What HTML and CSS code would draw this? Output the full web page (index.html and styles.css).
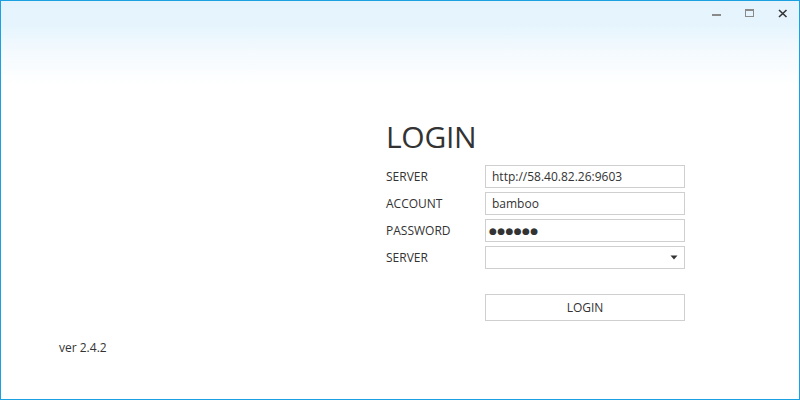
FILE: index.html
```html
<!DOCTYPE html>
<html>
<head>
<meta charset="utf-8">
<link rel="stylesheet" href="styles.css">
</head>
<body>
<div class="window">
  <div class="titlebar">
    <button class="tb-btn" aria-label="Minimize">
      <svg width="10" height="10" viewBox="0 0 10 10"><rect x="0" y="5" width="9" height="2" fill="#8a8a8a"/></svg>
    </button>
    <button class="tb-btn" aria-label="Maximize">
      <svg width="10" height="10" viewBox="0 0 10 10"><rect x="0.5" y="0.5" width="8" height="7" fill="none" stroke="#8a8a8a" stroke-width="1"/><rect x="0" y="0" width="9" height="2" fill="#8a8a8a"/></svg>
    </button>
    <button class="tb-btn" aria-label="Close">
      <svg width="10" height="10" viewBox="0 0 10 10"><path d="M1 1 L8.5 8 M8.5 1 L1 8" stroke="#333" stroke-width="1.6" fill="none"/></svg>
    </button>
  </div>
  <div class="main">
    <div class="form">
      <h1 class="title">LOGIN</h1>
      <div class="grid">
        <label class="lbl">SERVER</label>
        <input class="field" type="text" value="http://58.40.82.26:9603">
        <label class="lbl">ACCOUNT</label>
        <input class="field" type="text" value="bamboo">
        <label class="lbl">PASSWORD</label>
        <div class="field dots">●●●●●●</div>
        <label class="lbl">SERVER</label>
        <div class="field select">
          <svg width="8" height="5" viewBox="0 0 8 5"><path d="M0.5 0.5 L7.5 0.5 L4 4.5 Z" fill="#333"/></svg>
        </div>
      </div>
      <div class="actions">
        <button class="login-btn">LOGIN</button>
      </div>
    </div>
  </div>
  <div class="footer">ver 2.4.2</div>
</div>
</body>
</html>
```

FILE: styles.css
```css
html, body {
  margin: 0;
  padding: 0;
  background: #fff;
}
* { box-sizing: border-box; }

.window {
  width: 800px;
  height: 400px;
  border: 1px solid #1ba1e2;
  background: linear-gradient(to bottom, #e5f4fc 0px, #e6f5fd 25px, #f4fafe 50px, #ffffff 85px);
  font-family: "Open Sans", "Noto Sans", sans-serif;
  color: #333;
  display: flex;
  flex-direction: column;
}

.titlebar {
  display: flex;
  justify-content: flex-end;
  height: 26px;
}
.tb-btn {
  width: 33px;
  height: 26px;
  border: 0;
  background: transparent;
  padding: 0;
  display: flex;
  align-items: center;
  justify-content: center;
}
.tb-btn svg { display: block; }

.main {
  flex: 1;
  padding-left: 384px;
  padding-top: 92px;
}
.title {
  margin: 0 0 0 1px;
  font-weight: 400;
  font-size: 30px;
  line-height: 36px;
  color: #333;
  letter-spacing: -0.3px;
}
.grid {
  margin-top: 10px;
  display: grid;
  grid-template-columns: 100px 200px;
  grid-auto-rows: 23px;
  row-gap: 4px;
  align-items: center;
}
.lbl {
  font-size: 12px;
  line-height: 16px;
  color: #333;
  padding-left: 1px;
  padding-top: 1px;
}
.field {
  width: 200px;
  height: 23px;
  border: 1px solid #cfcfcf;
  background: #fff;
  font-family: "Open Sans", "Noto Sans", sans-serif;
  font-size: 12px;
  color: #333;
  padding: 0 6px;
  margin: 0;
  outline: none;
  display: flex;
  align-items: center;
}
.dots {
  font-family: "DejaVu Sans", sans-serif;
  font-size: 9px;
  letter-spacing: 0.4px;
  padding-left: 3px;
}
.select {
  justify-content: flex-end;
  padding-right: 6px;
}
.actions {
  margin-top: 25px;
  padding-left: 100px;
}
.login-btn {
  width: 200px;
  height: 27px;
  border: 1px solid #cfcfcf;
  background: #fff;
  font-family: "Open Sans", "Noto Sans", sans-serif;
  font-size: 12px;
  color: #333;
  padding: 0;
}
.footer {
  padding-left: 58px;
  height: 60px;
  font-size: 12px;
  color: #333;
}
```
